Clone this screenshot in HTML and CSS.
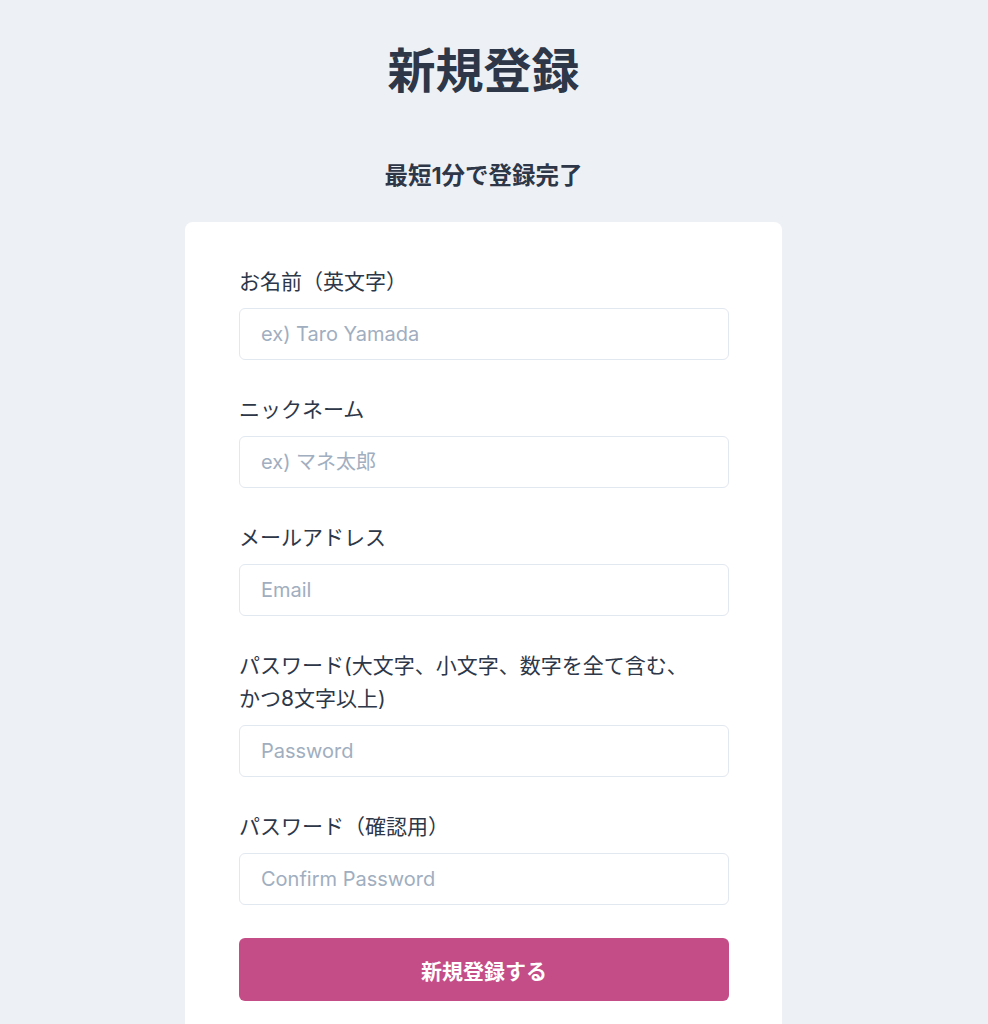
FILE: index.html
```html
<!DOCTYPE html>
<html lang="ja">
<head>
  <meta charset="utf-8">
  <title>新規登録</title>
  <link rel="stylesheet" href="styles.css">
</head>
<body>

<div class="page">
  <h1 class="title">新規登録</h1>
  <p class="lead">最短1分で登録完了</p>

  <form class="card">
    <div class="field">
      <label class="label" for="name">お名前（英文字）</label>
      <input class="input" id="name" type="text" placeholder="ex) Taro Yamada">
    </div>
    <div class="field">
      <label class="label" for="nickname">ニックネーム</label>
      <input class="input" id="nickname" type="text" placeholder="ex) マネ太郎">
    </div>
    <div class="field">
      <label class="label" for="email">メールアドレス</label>
      <input class="input" id="email" type="email" placeholder="Email">
    </div>
    <div class="field">
      <label class="label" for="password">パスワード(大文字、小文字、数字を全て含む、<br>かつ8文字以上)</label>
      <input class="input" id="password" type="password" placeholder="Password">
    </div>
    <div class="field">
      <label class="label" for="confirm">パスワード（確認用）</label>
      <input class="input" id="confirm" type="password" placeholder="Confirm Password">
    </div>
    <button class="submit" type="submit">新規登録する</button>
  </form>
</div>

</body>
</html>
```

FILE: styles.css
```css
html, body {
  margin: 0;
  background: #edf1f6;
}
body {
  font-family: "Inter", "Noto Sans CJK JP", sans-serif;
  color: #2d3748;
  padding-right: 21px;
}
.page {
  width: 597px;
  margin: 0 auto;
  padding-top: 36px;
}
.title {
  margin: 0;
  text-align: center;
  font-size: 48px;
  line-height: 69px;
  font-weight: 700;
}
.lead {
  margin: 54px 0 0;
  text-align: center;
  font-size: 23.5px;
  line-height: 33px;
  font-weight: 700;
}
.card {
  margin-top: 30px;
  background: #fff;
  border-radius: 8px;
  padding: 43px 53px 60px 54px;
}
.field {
  margin-bottom: 33px;
}
.label {
  display: block;
  font-size: 21px;
  line-height: 33px;
  margin-bottom: 10px;
}
.input {
  display: block;
  box-sizing: border-box;
  width: 100%;
  height: 52px;
  padding: 0 21px;
  border: 1px solid #e2e8f0;
  border-radius: 6px;
  font-family: inherit;
  font-size: 20px;
  color: #2d3748;
  background: #fff;
}
.input::placeholder {
  color: #a0aec0;
}
.submit {
  display: block;
  width: 100%;
  height: 63px;
  border: 0;
  border-radius: 6px;
  background: #c44c87;
  color: #fff;
  font-family: inherit;
  font-size: 21px;
  font-weight: 700;
}
```
